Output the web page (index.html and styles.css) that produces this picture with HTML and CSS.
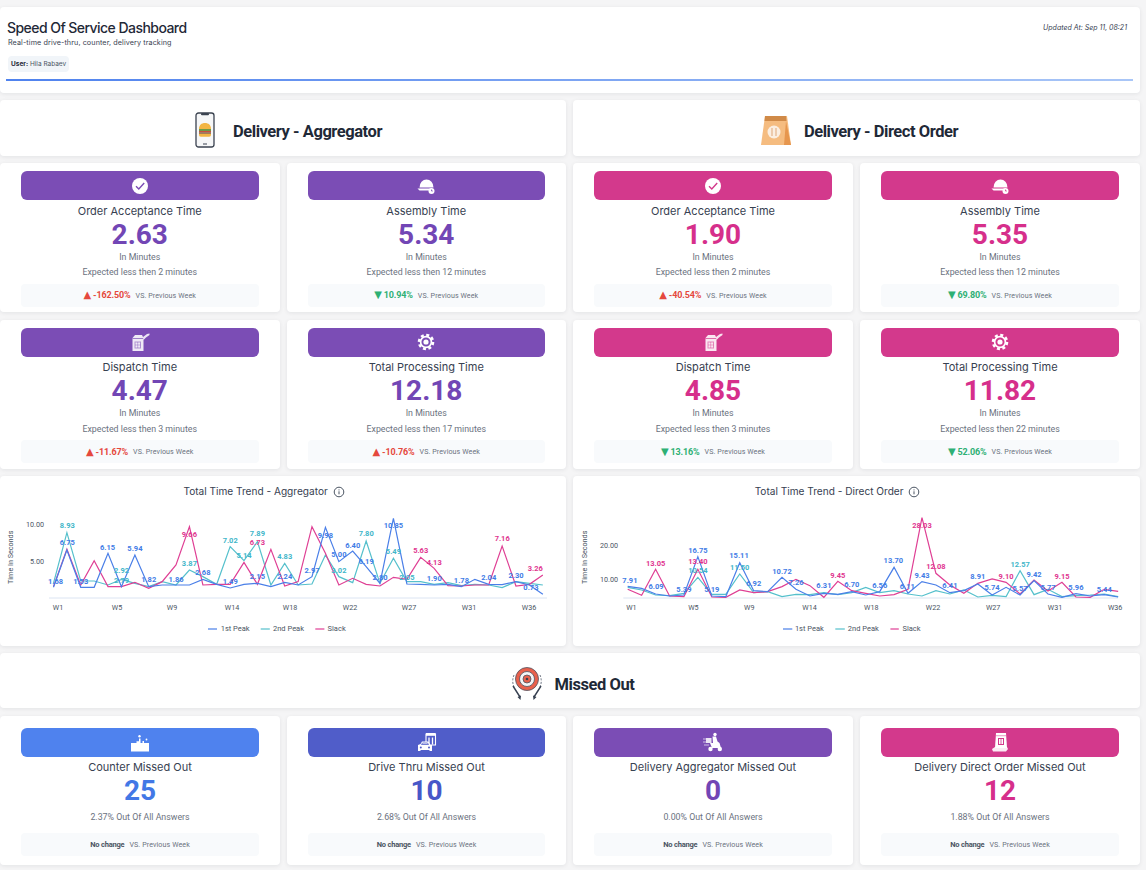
FILE: index.html
```html
<!DOCTYPE html>
<html lang="en">
<head>
<meta charset="utf-8">
<title>Speed Of Service Dashboard</title>
<link rel="stylesheet" href="styles.css">
</head>
<body>
<svg class="defs" xmlns="http://www.w3.org/2000/svg">
  <symbol id="i-check" viewBox="0 0 20 20"><circle cx="10" cy="10" r="8" fill="#fff"/><path class="stroke-accent" d="M6 10.2l2.800 2.800L14.200 7" fill="none" stroke-width="1.400"/></symbol>
  <symbol id="i-helmet" viewBox="0 0 20 20"><path d="M3.500 11.500a7 8 0 0 1 14 0z" fill="#fff"/><path d="M1.500 12.500h14.500v2H3.500z" fill="#fff"/><circle cx="15.500" cy="15" r="3" fill="#fff"/><path class="stroke-accent" d="M15.500 13.600V15h1.300" fill="none" stroke-width=".8"/></symbol>
  <symbol id="i-box" viewBox="0 0 20 20"><path d="M2.500 6l2.500-3h7l1.500 3v13h-11z" fill="#fff" opacity=".88"/><path class="stroke-accent" d="M2.500 6.500h11" fill="none" stroke-width=".7"/><path d="M13 5l4-3 2.500-.5v1.500L16 5.500 13.500 8z" fill="#fff" opacity=".85"/><rect class="stroke-accent" x="5" y="10" width="5.500" height="6" fill="none" stroke-width="1" opacity=".55"/><path class="stroke-accent" d="M5 13h5.500M7.700 10v6" fill="none" stroke-width=".7" opacity=".55"/></symbol>
  <symbol id="i-gear" viewBox="0 0 20 20"><circle cx="10" cy="10" r="7" fill="none" stroke="#fff" stroke-width="2.600" stroke-dasharray="3 2.500"/><circle cx="10" cy="10" r="5.400" fill="none" stroke="#fff" stroke-width="1.700"/><circle cx="10" cy="10" r="2.600" fill="#fff"/></symbol>
  <symbol id="i-counter" viewBox="0 0 20 20"><rect x="1" y="11" width="18" height="8.500" fill="#fff"/><path d="M6.500 11V9.300h2.500V6.500h1.500V11zM12.500 11V9h1.500v2z" fill="#fff"/><circle cx="9.500" cy="4.300" r="1.200" fill="#fff"/><circle cx="16.500" cy="7.500" r=".9" fill="#fff"/></symbol>
  <symbol id="i-drive" viewBox="0 0 20 20"><path d="M9 2h9.500v11H9z" fill="none" stroke="#fff" stroke-width="1.100"/><path d="M9 1h9.500v2.800H9z" fill="#fff"/><path d="M12 5.500v7M15.500 5.500v7" stroke="#fff" stroke-width="1.300"/><path d="M3.500 12l1.500-2.500h6.500L13.500 13H15v6h-2.500v-1H3.500v1H1v-6z" fill="#fff"/><path class="stroke-accent" d="M4.500 12.500l1-1.500h5l1 1.500z" fill="none" stroke-width=".8"/><circle class="fill-accent" cx="3.800" cy="15.500" r="1"/><circle class="fill-accent" cx="12" cy="15.500" r="1"/></symbol>
  <symbol id="i-scooter" viewBox="0 0 20 20"><circle cx="12" cy="2.500" r="1.700" fill="#fff"/><path d="M9.500 4.500H13l1.500 5 2 1.500 1.500 5H9l-2-5h3z" fill="#fff"/><rect x="3" y="6" width="5.500" height="5" fill="#fff" opacity=".85"/><path d="M0 7h3M0 10h3M1 13h5" stroke="#fff" stroke-width="1" opacity=".65"/><circle cx="7.500" cy="17" r="2.200" fill="#fff"/><circle cx="16.800" cy="17" r="2.200" fill="#fff"/></symbol>
  <symbol id="i-bag" viewBox="0 0 20 20"><path d="M6 1h10l1 15H5z" fill="#fff"/><rect class="fill-accent" x="6" y="3.200" width="10" height="1" opacity=".5"/><rect class="stroke-accent" x="8.500" y="6.500" width="5" height="6" fill="none" stroke-width="1"/><path class="stroke-accent" d="M11 6.500v6" fill="none" stroke-width=".8"/><path d="M2 17l3-2h12l1 2-2 2.500H3z" fill="#fff" opacity=".9"/></symbol>
</svg>

<main class="page">
  <header class="card top">
    <div class="top-row">
      <div>
        <h1 class="top-title">Speed Of Service Dashboard</h1>
        <p class="top-sub">Real-time drive-thru, counter, delivery tracking</p>
      </div>
      <p class="updated">Updated At: Sep 11, 08:21</p>
    </div>
    <div class="user"><b>User:</b> Hila Rabaev</div>
    <div class="top-line"></div>
  </header>

  <div class="split">
    <section class="col">
      <div class="card section-head">
        <svg class="head-icon phone" viewBox="0 0 20 36"><rect x="1" y="1" width="18" height="34" rx="2.500" fill="#f6f7f8" stroke="#3b4350" stroke-width="1.300"/><rect x="6" y="1" width="8" height="2.200" rx="1" fill="#3b4350"/><rect x="8" y="31.500" width="4" height="1" fill="#3b4350"/><path d="M4 17c0-4 2.500-6 6-6s6 2 6 6z" fill="#f2b544"/><rect x="4" y="17" width="12" height="2" fill="#6f9a45"/><rect x="4" y="19" width="12" height="1.500" fill="#c94f3d"/><rect x="4" y="20.500" width="12" height="1.300" fill="#6b4a35"/><path d="M4 21.800h12v1.200a1.800 1.800 0 0 1-1.800 1.800H5.800A1.800 1.800 0 0 1 4 23z" fill="#f2b544"/></svg>
        <h2 class="section-title">Delivery - Aggregator</h2>
      </div>
      <div class="metrics">
        <article class="card metric purple">
          <div class="metric-bar"><svg class="bar-icon"><use href="#i-check"/></svg></div>
          <h3 class="metric-title">Order Acceptance Time</h3>
          <div class="metric-value">2.63</div>
          <p class="metric-unit">In Minutes</p>
          <p class="metric-note">Expected less then 2 minutes</p>
          <div class="metric-foot"><span class="delta up">-162.50%</span><span class="vs">VS. Previous Week</span></div>
        </article>
        <article class="card metric purple">
          <div class="metric-bar"><svg class="bar-icon"><use href="#i-helmet"/></svg></div>
          <h3 class="metric-title">Assembly Time</h3>
          <div class="metric-value">5.34</div>
          <p class="metric-unit">In Minutes</p>
          <p class="metric-note">Expected less then 12 minutes</p>
          <div class="metric-foot"><span class="delta down">10.94%</span><span class="vs">VS. Previous Week</span></div>
        </article>
        <article class="card metric purple">
          <div class="metric-bar"><svg class="bar-icon"><use href="#i-box"/></svg></div>
          <h3 class="metric-title">Dispatch Time</h3>
          <div class="metric-value">4.47</div>
          <p class="metric-unit">In Minutes</p>
          <p class="metric-note">Expected less then 3 minutes</p>
          <div class="metric-foot"><span class="delta up">-11.67%</span><span class="vs">VS. Previous Week</span></div>
        </article>
        <article class="card metric purple">
          <div class="metric-bar"><svg class="bar-icon"><use href="#i-gear"/></svg></div>
          <h3 class="metric-title">Total Processing Time</h3>
          <div class="metric-value">12.18</div>
          <p class="metric-unit">In Minutes</p>
          <p class="metric-note">Expected less then 17 minutes</p>
          <div class="metric-foot"><span class="delta up">-10.76%</span><span class="vs">VS. Previous Week</span></div>
        </article>
      </div>
      <div class="card chart">
        <h3 class="chart-title">Total Time Trend - Aggregator <svg class="info" viewBox="0 0 12 12"><circle cx="6" cy="6" r="4.800" fill="none" stroke="#4b5563"/><path d="M6 5.300v3M6 3.400v1" stroke="#4b5563"/></svg></h3>
        <svg class="chart-svg" viewBox="0 0 566 146">
          <line class="axis" x1="49" y1="98" x2="547" y2="98"/>
          <g transform="translate(0 -30) scale(.3636 .3333)">
            <polyline class="l-teal" points="147,340 184,188 222,333 259,333 297,345 334,328 371,340 409,350 446,335 484,345 521,300 558,320 596,343 633,230 671,272 708,215 745,345 783,280 820,345 858,342 895,255 932,320 970,338 1007,213 1045,340 1082,265 1119,335 1157,335 1194,343 1232,338 1269,347 1306,343 1344,345 1381,353 1419,335 1456,340 1493,345"/>
            <polyline class="l-pink" points="147,350 184,238 222,345 259,272 297,350 334,350 371,337 409,355 446,335 484,285 521,170 558,345 596,343 633,343 671,277 708,343 745,238 783,348 820,335 858,170 895,250 932,345 970,325 1007,343 1045,348 1082,322 1119,328 1157,262 1194,295 1232,347 1269,348 1306,345 1344,345 1381,228 1419,348 1456,343 1493,315"/>
            <polyline class="l-blue" points="147,352 184,240 222,352 259,352 297,250 334,350 371,255 409,350 446,345 484,345 521,345 558,328 596,343 633,354 671,343 708,340 745,350 783,337 820,345 858,320 895,172 932,275 970,243 1007,290 1045,340 1082,145 1119,342 1157,343 1194,345 1232,343 1269,350 1306,328 1344,343 1381,344 1419,335 1456,345 1493,373"/>
          </g>
          <g class="t-axis" text-anchor="end"><text x="44" y="27.200">10.00</text><text x="44" y="64.200">5.00</text></g>
          <text class="t-axis-title" transform="translate(13 57.300) rotate(-90)" text-anchor="middle">Time In Seconds</text>
          <g class="t-axis" text-anchor="middle"><text x="58" y="110">W1</text><text x="117" y="110">W5</text><text x="172" y="110">W9</text><text x="232" y="110">W14</text><text x="290" y="110">W18</text><text x="350" y="110">W22</text><text x="409" y="110">W27</text><text x="469" y="110">W31</text><text x="529" y="110">W36</text></g>
          <g class="t-val blue" text-anchor="middle"><text x="55.600" y="83.500">1.68</text><text x="67.300" y="44.800">6.75</text><text x="80.700" y="84.200">1.53</text><text x="107.600" y="49.500">6.15</text><text x="134.900" y="51.200">5.94</text><text x="148.700" y="81.800">1.82</text><text x="176" y="81.800">1.86</text><text x="202.900" y="75.200">2.68</text><text x="230.200" y="83.800">1.49</text><text x="257.400" y="79.200">2.15</text><text x="284.700" y="79.200">2.24</text><text x="312" y="73.200">2.97</text><text x="325.400" y="37.500">9.98</text><text x="338.900" y="57.200">5.00</text><text x="352.700" y="47.500">6.40</text><text x="366.200" y="63.500">6.19</text><text x="380" y="79.800">2.80</text><text x="393.400" y="28.200">10.85</text><text x="434.200" y="81.200">1.90</text><text x="461.400" y="82.500">1.78</text><text x="488.700" y="80.200">2.04</text><text x="516" y="78.200">2.30</text><text x="530.900" y="89.800">0.73</text></g>
          <g class="t-val teal" text-anchor="middle"><text x="67.300" y="28.200">8.93</text><text x="121.500" y="73.200">2.92</text><text x="121.500" y="82.500">2.79</text><text x="189.400" y="65.800">3.87</text><text x="230.200" y="42.500">7.02</text><text x="244" y="57.500">5.14</text><text x="257.400" y="35.800">7.89</text><text x="284.700" y="58.800">4.83</text><text x="338.900" y="72.800">3.02</text><text x="366.200" y="36.200">7.80</text><text x="393.400" y="54.200">5.49</text><text x="406.900" y="80.200">2.05</text></g>
          <g class="t-val pink" text-anchor="middle"><text x="189.400" y="37.200">9.66</text><text x="257.400" y="44.800">6.73</text><text x="420.700" y="52.800">5.63</text><text x="434.200" y="64.500">4.13</text><text x="502.200" y="41.200">7.16</text><text x="535.300" y="71.200">3.26</text></g>
          <line class="l-blue" x1="208" y1="129" x2="217" y2="129"/><text class="t-legend" x="220.700" y="131">1st Peak</text>
          <line class="l-teal" x1="260.700" y1="129" x2="269.800" y2="129"/><text class="t-legend" x="273" y="131">2nd Peak</text>
          <line class="l-pink" x1="315.300" y1="129" x2="324.400" y2="129"/><text class="t-legend" x="327.600" y="131">Slack</text>
        </svg>
      </div>
    </section>

    <section class="col">
      <div class="card section-head direct-head">
        <svg class="head-icon bag" viewBox="0 0 30 30"><path d="M4 1h22l4 29H0z" fill="#f5bc80"/><path d="M25 6l5 24h-7z" fill="#e6964e"/><path d="M4 1h21l.5 5H3.500z" fill="#d08a48"/><circle cx="13" cy="17" r="6.500" fill="#fbeee0"/><path d="M11 13v8M15 13v8" stroke="#e3b48a" stroke-width="1.200"/></svg>
        <h2 class="section-title">Delivery - Direct Order</h2>
      </div>
      <div class="metrics">
        <article class="card metric magenta">
          <div class="metric-bar"><svg class="bar-icon"><use href="#i-check"/></svg></div>
          <h3 class="metric-title">Order Acceptance Time</h3>
          <div class="metric-value">1.90</div>
          <p class="metric-unit">In Minutes</p>
          <p class="metric-note">Expected less then 2 minutes</p>
          <div class="metric-foot"><span class="delta up">-40.54%</span><span class="vs">VS. Previous Week</span></div>
        </article>
        <article class="card metric magenta">
          <div class="metric-bar"><svg class="bar-icon"><use href="#i-helmet"/></svg></div>
          <h3 class="metric-title">Assembly Time</h3>
          <div class="metric-value">5.35</div>
          <p class="metric-unit">In Minutes</p>
          <p class="metric-note">Expected less then 12 minutes</p>
          <div class="metric-foot"><span class="delta down">69.80%</span><span class="vs">VS. Previous Week</span></div>
        </article>
        <article class="card metric magenta">
          <div class="metric-bar"><svg class="bar-icon"><use href="#i-box"/></svg></div>
          <h3 class="metric-title">Dispatch Time</h3>
          <div class="metric-value">4.85</div>
          <p class="metric-unit">In Minutes</p>
          <p class="metric-note">Expected less then 3 minutes</p>
          <div class="metric-foot"><span class="delta down">13.16%</span><span class="vs">VS. Previous Week</span></div>
        </article>
        <article class="card metric magenta">
          <div class="metric-bar"><svg class="bar-icon"><use href="#i-gear"/></svg></div>
          <h3 class="metric-title">Total Processing Time</h3>
          <div class="metric-value">11.82</div>
          <p class="metric-unit">In Minutes</p>
          <p class="metric-note">Expected less then 22 minutes</p>
          <div class="metric-foot"><span class="delta down">52.06%</span><span class="vs">VS. Previous Week</span></div>
        </article>
      </div>
      <div class="card chart">
        <h3 class="chart-title">Total Time Trend - Direct Order <svg class="info" viewBox="0 0 12 12"><circle cx="6" cy="6" r="4.800" fill="none" stroke="#4b5563"/><path d="M6 5.300v3M6 3.400v1" stroke="#4b5563"/></svg></h3>
        <svg class="chart-svg" viewBox="0 0 567 146">
          <line class="axis" x1="50.300" y1="98" x2="545" y2="98"/>
          <g transform="translate(-3 -30) scale(.3674 .3333)">
            <polyline class="l-teal" points="157,352 195,360 233,375 271,377 310,370 348,322 386,373 424,373 462,312 500,368 538,365 577,380 615,373 653,374 691,368 729,374 767,368 805,352 843,368 882,362 920,372 958,378 996,362 1034,372 1072,360 1110,381 1149,376 1187,380 1225,302 1263,374 1301,358 1339,380 1377,377 1416,375 1454,372 1492,380"/>
            <polyline class="l-pink" points="157,358 195,376 233,298 271,378 310,380 348,298 386,381 424,382 462,360 500,368 538,365 577,350 615,328 653,347 691,382 729,334 767,362 805,370 843,378 882,374 920,358 958,143 996,310 1034,345 1072,370 1110,340 1149,327 1187,337 1225,372 1263,330 1301,363 1339,337 1377,381 1416,382 1454,358 1492,364"/>
            <polyline class="l-blue" points="157,349 195,355 233,372 271,378 310,375 348,260 386,378 424,380 462,278 500,362 538,365 577,322 615,358 653,378 691,370 729,373 767,365 805,375 843,365 882,292 920,370 958,335 996,345 1034,368 1072,362 1110,342 1149,375 1187,352 1225,375 1263,332 1301,372 1339,382 1377,371 1416,378 1454,374 1492,381"/>
          </g>
          <g class="t-axis" text-anchor="end"><text x="45.100" y="47.800">20.00</text><text x="45.100" y="82.200">10.00</text></g>
          <text class="t-axis-title" transform="translate(13.500 57.300) rotate(-90)" text-anchor="middle">Time In Seconds</text>
          <g class="t-axis" text-anchor="middle"><text x="58.400" y="110">W1</text><text x="120.400" y="110">W5</text><text x="176.300" y="110">W9</text><text x="236.500" y="110">W14</text><text x="298.300" y="110">W18</text><text x="360" y="110">W22</text><text x="420.200" y="110">W27</text><text x="482" y="110">W31</text><text x="542.200" y="110">W36</text></g>
          <g class="t-val blue" text-anchor="middle"><text x="56.900" y="82.800">7.91</text><text x="83" y="89.200">6.09</text><text x="110.900" y="91.500">5.39</text><text x="124.900" y="52.800">16.75</text><text x="138.800" y="92.200">5.19</text><text x="166" y="58.200">15.11</text><text x="180.700" y="86.200">6.92</text><text x="209" y="73.500">10.72</text><text x="223" y="85.200">7.26</text><text x="250.900" y="88.200">6.31</text><text x="278.800" y="87.200">6.70</text><text x="306.700" y="87.500">6.56</text><text x="320.300" y="62.800">13.70</text><text x="334.300" y="88.500">6.11</text><text x="349" y="77.500">9.43</text><text x="376.900" y="87.500">6.41</text><text x="404.800" y="79.200">8.91</text><text x="419.100" y="89.800">5.74</text><text x="447.100" y="90.500">5.57</text><text x="461" y="77.200">9.42</text><text x="475" y="89.800">5.77</text><text x="502.900" y="89.500">5.96</text><text x="531.200" y="91.500">5.44</text></g>
          <g class="t-val teal" text-anchor="middle"><text x="124.900" y="72.800">10.54</text><text x="166.700" y="69.800">11.50</text><text x="447.100" y="66.500">12.57</text></g>
          <g class="t-val pink" text-anchor="middle"><text x="82.600" y="65.500">13.05</text><text x="124.900" y="64.200">13.40</text><text x="264.800" y="77.500">9.45</text><text x="349" y="28.200">28.03</text><text x="362.900" y="68.500">12.08</text><text x="433.100" y="78.800">9.10</text><text x="489" y="78.800">9.15</text></g>
          <line class="l-blue" x1="210" y1="129" x2="219.300" y2="129"/><text class="t-legend" x="221.900" y="131">1st Peak</text>
          <line class="l-teal" x1="262.300" y1="129" x2="271.800" y2="129"/><text class="t-legend" x="274.800" y="131">2nd Peak</text>
          <line class="l-pink" x1="317.400" y1="129" x2="325.800" y2="129"/><text class="t-legend" x="329.500" y="131">Slack</text>
        </svg>
      </div>
    </section>
  </div>

  <div class="card section-head missed-head">
    <svg class="head-icon target" viewBox="0 0 34 36"><path d="M4 10a15 15 0 0 0 0 12M30 10a15 15 0 0 1 0 12" fill="none" stroke="#6b7280" stroke-width="1" stroke-dasharray="2 1.500"/><circle cx="17" cy="14" r="11.500" fill="#e8604c" stroke="#4b5563" stroke-width=".8"/><circle cx="17" cy="14" r="7.500" fill="#f3f4f6" stroke="#4b5563" stroke-width=".8"/><circle cx="17" cy="14" r="4" fill="#e8604c" stroke="#4b5563" stroke-width=".8"/><circle cx="17" cy="14" r="1.300" fill="#374151"/><path d="M3 21l7 11M31 21l-7 11" stroke="#374151" stroke-width="1.400"/><path d="M10.500 35l-3-3 3.500-1.500zM23.500 35l3-3-3.500-1.500z" fill="#374151"/></svg>
    <h2 class="section-title">Missed Out</h2>
  </div>

  <div class="missed">
    <article class="card metric wide blue-c">
      <div class="metric-bar"><svg class="bar-icon"><use href="#i-counter"/></svg></div>
      <h3 class="metric-title">Counter Missed Out</h3>
      <div class="metric-value">25</div>
      <p class="metric-unit share">2.37% Out Of All Answers</p>
      <div class="metric-foot"><span class="none">No change</span><span class="vs">VS. Previous Week</span></div>
    </article>
    <article class="card metric wide indigo">
      <div class="metric-bar"><svg class="bar-icon"><use href="#i-drive"/></svg></div>
      <h3 class="metric-title">Drive Thru Missed Out</h3>
      <div class="metric-value">10</div>
      <p class="metric-unit share">2.68% Out Of All Answers</p>
      <div class="metric-foot"><span class="none">No change</span><span class="vs">VS. Previous Week</span></div>
    </article>
    <article class="card metric wide purple">
      <div class="metric-bar"><svg class="bar-icon"><use href="#i-scooter"/></svg></div>
      <h3 class="metric-title">Delivery Aggregator Missed Out</h3>
      <div class="metric-value">0</div>
      <p class="metric-unit share">0.00% Out Of All Answers</p>
      <div class="metric-foot"><span class="none">No change</span><span class="vs">VS. Previous Week</span></div>
    </article>
    <article class="card metric wide magenta">
      <div class="metric-bar"><svg class="bar-icon"><use href="#i-bag"/></svg></div>
      <h3 class="metric-title">Delivery Direct Order Missed Out</h3>
      <div class="metric-value">12</div>
      <p class="metric-unit share">1.88% Out Of All Answers</p>
      <div class="metric-foot"><span class="none">No change</span><span class="vs">VS. Previous Week</span></div>
    </article>
  </div>
</main>
</body>
</html>
```

FILE: styles.css
```css
* { box-sizing: border-box; }
html, body { margin: 0; padding: 0; }
body {
  background: #f5f5f6;
  font-family: "Inter", "Liberation Sans", sans-serif;
  color: #1f2937;
  height: 870px;
  overflow: hidden;
}
h1, h2, h3, p { margin: 0; font-weight: normal; }
.defs { display: none; }

.page {
  width: 1140px;
  padding-top: 6.5px;
  display: flex;
  flex-direction: column;
  gap: 7.5px;
}
.card {
  background: #fff;
  border-radius: 4px;
  box-shadow: 0 1px 4px rgba(15, 23, 42, .08);
}

/* top banner */
.top { height: 86px; padding: 13px 7px 0 6px; }
.top-row { display: flex; justify-content: space-between; }
.top-title {
  font-size: 14px;
  line-height: 16px;
  font-weight: 500;
  letter-spacing: -.55px;
  color: #1f2937;
  margin-left: 1px;
}
.top-sub { font-size: 7.2px; line-height: 10px; margin: 2px 0 0 2px; color: #374151; letter-spacing: .1px; }
.updated { font-size: 7px; font-style: italic; line-height: 16px; color: #374151; padding-right: 6px; }
.user {
  display: inline-block;
  margin: 8px 0 0 2px;
  height: 16px;
  line-height: 16px;
  padding: 0 3px;
  background: #f1f5f9;
  border-radius: 4px;
  font-size: 6.5px;
  color: #4b5563;
}
.user b { color: #1f2937; font-weight: 700; }
.top-line { height: 2px; margin-top: 7px; background: linear-gradient(90deg, #4f82ee, #a9c6f7); }

/* columns */
.split { display: grid; grid-template-columns: 566px 567px; column-gap: 7px; }
.col { display: flex; flex-direction: column; gap: 7.5px; }
.section-head {
  height: 55.5px;
  display: flex;
  align-items: center;
  justify-content: center;
  padding: 4px 0 0 11px;
}
.section-title {
  font-family: "Roboto", "Liberation Sans", sans-serif;
  font-size: 16.5px;
  font-weight: 700;
  letter-spacing: -.45px;
  color: #1f2937;
  margin-top: 4px;
}
.head-icon { display: block; flex: none; }
.phone { width: 20px; height: 36px; margin-right: 18px; }
.bag { width: 30px; height: 30px; margin-right: 13px; }
.target { width: 34px; height: 36px; margin-right: 11px; }
.direct-head { padding-left: 6px; }
.missed-head { height: 55px; padding-left: 4px; }

/* metric cards */
.metrics { display: grid; grid-template-columns: 1fr 1fr; gap: 7.5px 7px; }
.missed { display: grid; grid-template-columns: 280px 279px 280px 280px; column-gap: 7px; }
.metric {
  height: 149px;
  padding: 8px 21px 0;
  display: flex;
  flex-direction: column;
  text-align: center;
}
.metric.wide { padding-top: 12px; }
.metric-bar {
  height: 29px;
  flex: none;
  border-radius: 6px;
  display: flex;
  align-items: center;
  justify-content: center;
  background: var(--accent);
}
.bar-icon { width: 20px; height: 20px; display: block; }
.stroke-accent { stroke: var(--accent); }
.fill-accent { fill: var(--accent); }
.purple { --accent: #7b4db5; --num: #7246b5; }
.magenta { --accent: #d3398c; --num: #d62f8b; }
.blue-c { --accent: #4f82ee; --num: #4278e6; }
.indigo { --accent: #505dc9; --num: #4757c8; }
.metric-title { font-size: 11px; line-height: 19px; margin-top: 1.500px; color: #374151; }
.metric-value {
  font-family: "Roboto", "Liberation Sans", sans-serif;
  font-size: 28px;
  line-height: 28px;
  font-weight: 700;
  color: var(--num);
}
.metric-unit, .metric-note {
  font-family: "Roboto", "Liberation Sans", sans-serif;
  font-size: 8.8px;
  line-height: 14px;
  color: #6b7280;
}
.metric-unit { margin-top: 1px; }
.metric-note { margin-top: 1.500px; }
.share { margin-top: 5px; }
.metric-foot {
  height: 23px;
  margin-top: 4.500px;
  background: #f8fafc;
  border-radius: 4px;
  display: flex;
  align-items: center;
  justify-content: center;
  gap: 5px;
  font-family: "Roboto", "Liberation Sans", sans-serif;
}
.wide .metric-foot { margin-top: 9px; }
.delta { font-size: 9px; font-weight: 700; letter-spacing: -.15px; display: flex; align-items: center; gap: 2px; }
.delta::before { font-size: 10px; line-height: 10px; font-family: "DejaVu Sans", sans-serif; }
.up { color: #e5483d; }
.up::before { content: "\25B2"; }
.down { color: #2eb074; }
.down::before { content: "\25BC"; }
.none { font-size: 7.5px; font-weight: 700; letter-spacing: -.2px; color: #4b5563; }
.vs { font-size: 7.1px; color: #6b7280; letter-spacing: .1px; }

/* charts */
.chart { height: 169.5px; }
.chart-title {
  height: 24px;
  font-size: 10.1px;
  line-height: 11px;
  padding: 10px 38px 0 0;
  text-align: center;
  color: #374151;
}
.info { width: 12px; height: 12px; vertical-align: -3px; margin-left: 2px; }
.chart-svg { display: block; width: 100%; height: 146px; font-family: "Roboto", "Liberation Sans", sans-serif; }
.axis { stroke: #dbe4f2; stroke-width: 1; }
.l-blue, .l-teal, .l-pink { fill: none; stroke-width: 1.200; vector-effect: non-scaling-stroke; }
.l-blue { stroke: #4a7fe8; }
.l-teal { stroke: #55c0cc; }
.l-pink { stroke: #df3f94; }
.t-axis { font-size: 7.200px; fill: #4b5563; }
.t-axis-title { font-size: 7.200px; fill: #4b5563; }
.t-legend { font-size: 7.500px; fill: #4b5563; }
.t-val { font-size: 7.500px; font-weight: 700; }
.t-val.blue { fill: #3f7ce6; }
.t-val.teal { fill: #3fb6c9; }
.t-val.pink { fill: #e0358f; }
```
